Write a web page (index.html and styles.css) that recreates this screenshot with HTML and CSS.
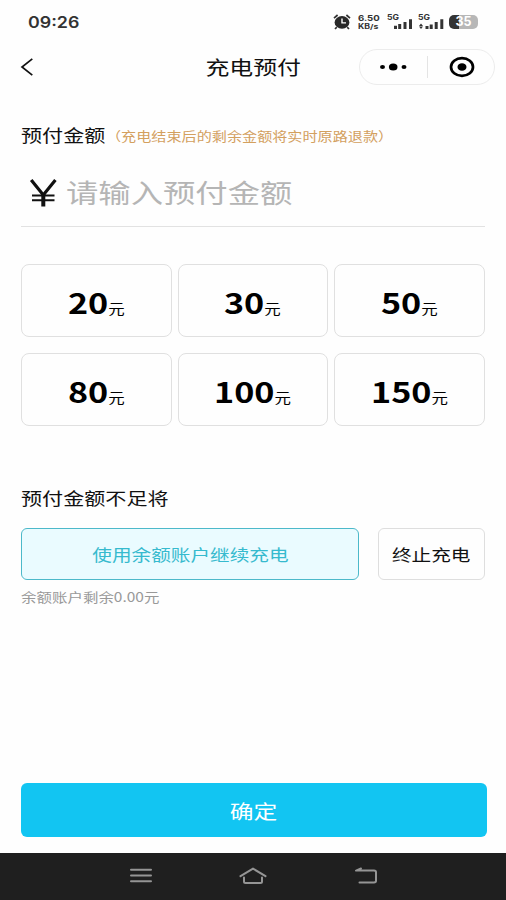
FILE: index.html
```html
<!DOCTYPE html>
<html lang="zh-CN">
<head>
<meta charset="utf-8">
<title>充电预付</title>
<link rel="stylesheet" href="styles.css">
</head>
<body>
<div class="screen">
  <header class="status">
    <span class="wide clock">09:26</span>
    <div class="indicators">
      <svg class="alarm" width="18" height="16" viewBox="0 0 18 16">
        <path d="M1 4.2 4.6 1M17 4.2 13.4 1M3.8 13.2 2 15M14.2 13.2 16 15" stroke="#333" stroke-width="1.7" fill="none"/>
        <ellipse cx="9" cy="8.4" rx="7.4" ry="6.3" fill="#292929"/>
        <path d="M9 4.6V8.9H13" stroke="#fff" stroke-width="1.4" fill="none"/>
      </svg>
      <div class="speed"><span>6.50</span><span>KB/s</span></div>
      <div class="signal">
        <span class="gen">5G</span>
        <svg width="26" height="12" viewBox="0 0 26 12"><path d="M8.5 12V8.7M12.7 12V7M18 12V5M23.5 12V2.2" stroke="#333" stroke-width="3"/></svg>
      </div>
      <div class="signal second">
        <span class="gen">5G</span>
        <svg width="26" height="12" viewBox="0 0 26 12"><path d="M3 6.5 5 9H1ZM3 12 1 9.6H5Z" fill="#333"/><path d="M9 12V9M13.2 12V7.5M18.2 12V5M23.8 12V2.2" stroke="#333" stroke-width="3"/></svg>
      </div>
      <div class="battery"><span>35</span></div>
    </div>
  </header>

  <nav class="titlebar">
    <svg class="back" width="14" height="20" viewBox="0 0 14 20"><path d="M12.3 1.8 2 10 12.3 18.2" fill="none" stroke="#111" stroke-width="1.7"/></svg>
    <h1 class="wide title">充电预付</h1>
    <div class="capsule">
      <svg width="134" height="34" viewBox="0 0 134 34">
        <ellipse cx="22.5" cy="17" rx="2.5" ry="2.1"/><ellipse cx="33.2" cy="17" rx="4.3" ry="3.6"/><ellipse cx="44" cy="17" rx="2.5" ry="2.1"/>
        <path d="M67.5 6V28" stroke="#e4e4e4"/>
        <ellipse cx="102" cy="17" rx="11" ry="8.9" fill="none" stroke="#000" stroke-width="2.7"/><ellipse cx="102" cy="17" rx="4.5" ry="3.8"/>
      </svg>
    </div>
  </nav>

  <main>
    <div class="heading">
      <h2 class="wide label amount">预付金额</h2>
      <span class="wide note">（充电结束后的剩余金额将实时原路退款）</span>
    </div>
    <div class="field">
      <svg class="yen" width="28" height="28" viewBox="0 0 28 28"><path d="M2.2 1 14.3 16 26.4 1" fill="none" stroke="#111" stroke-width="3.2"/><path d="M14.3 15V27.5" stroke="#111" stroke-width="4"/><path d="M3 16.4H25.5M3 21.2H25.5" stroke="#111" stroke-width="2"/></svg>
      <span class="wide placeholder">请输入预付金额</span>
    </div>
    <div class="options">
      <div class="option"><span class="wide price">20<small>元</small></span></div>
      <div class="option"><span class="wide price">30<small>元</small></span></div>
      <div class="option"><span class="wide price">50<small>元</small></span></div>
      <div class="option"><span class="wide price">80<small>元</small></span></div>
      <div class="option"><span class="wide price">100<small>元</small></span></div>
      <div class="option"><span class="wide price">150<small>元</small></span></div>
    </div>
    <h2 class="wide label shortage">预付金额不足将</h2>
    <div class="choices">
      <div class="choice selected"><span class="wide">使用余额账户继续充电</span></div>
      <div class="choice"><span class="wide">终止充电</span></div>
    </div>
    <p class="wide balance">余额账户剩余0.00元</p>
  </main>

  <div class="confirm"><span class="wide">确定</span></div>

  <footer class="system">
    <svg width="22" height="16" viewBox="0 0 22 16"><path d="M1 1.8H21M1 7.5H21M1 13.2H21" class="line"/></svg>
    <svg width="28" height="18" viewBox="0 0 28 18"><path d="M1.5 9.2 14 1.6 26.5 9.2M5 10.5V14.5Q5 16 6.5 16H21.5Q23 16 23 14.5V10.5" class="line"/></svg>
    <svg width="24" height="18" viewBox="0 0 24 18"><path d="M7 1.5 2 3.6H20Q22 3.6 22 5.3V13.8Q22 15.5 20 15.5H5.5" class="line"/></svg>
  </footer>
</div>
</body>
</html>
```
FILE: styles.css
```css
* { box-sizing: border-box; }
body {
  margin: 0;
  background: #fefefe;
  color: #111;
  font-family: "Noto Sans CJK SC", sans-serif;
}
h1, h2, p { margin: 0; font-weight: 400; }
svg { display: block; flex: none; }

.screen {
  width: 506px;
  height: 900px;
  display: flex;
  flex-direction: column;
  overflow: hidden;
}

/* Horizontally expanded lettering */
.wide {
  display: inline-block;
  white-space: nowrap;
  transform: scaleX(1.22);
  transform-origin: center;
}
.clock, .label, .note, .placeholder, .balance { transform-origin: left center; }

.status {
  height: 44px;
  display: flex;
  justify-content: space-between;
  padding: 0 28px;
  font-family: Inter, sans-serif;
  color: #333;
}
.clock {
  font-size: 15.5px;
  line-height: 45px;
  font-weight: 600;
  transform: scaleX(1.15);
}
.indicators {
  display: flex;
  align-items: flex-start;
  padding-top: 14px;
}
.speed {
  width: 22px;
  margin: 1px 7px 0;
  display: flex;
  flex-direction: column;
  font-size: 8px;
  line-height: 7.5px;
  font-weight: 700;
}
.speed span { transform: scaleX(1.2); transform-origin: left; }
.speed span + span { font-size: 7px; transform: scaleX(1.25); }
.signal { width: 26px; height: 15px; margin-right: 5px; }
.gen {
  display: block;
  height: 4px;
  font-size: 7.5px;
  line-height: 8px;
  font-weight: 700;
  transform: scaleX(1.15);
  transform-origin: left;
}
.signal svg { margin-top: -1px; }
.battery {
  width: 29px;
  height: 14px;
  margin-top: 1px;
  border-radius: 5px;
  background: linear-gradient(90deg, #333 36%, #b7b7b7 36%);
  color: #fff;
  font-size: 12.5px;
  line-height: 14px;
  font-weight: 700;
  text-align: center;
}

.titlebar {
  height: 46px;
  display: grid;
  grid-template-columns: 1fr auto 1fr;
  align-items: center;
  padding: 0 11px 0 20px;
}
.title { font-size: 19.6px; line-height: 46px; margin: 0 4.5px 0 -4.5px; }
.capsule {
  width: 136px;
  height: 36px;
  justify-self: end;
  border: 1px solid #ececec;
  border-radius: 18px;
}

main { flex: 1; padding: 0 21px; }
.heading { height: 60px; display: flex; align-items: center; padding-top: 29px; }
.label { font-size: 17.3px; }
.amount { width: 85px; line-height: 30px; }
.note { font-size: 12.6px; line-height: 30px; color: #d3a05e; padding-top: 2px; transform: scaleX(1.2); }
.field {
  height: 77px;
  display: flex;
  align-items: center;
  padding: 9px 0 0 8px;
  border-bottom: 1px solid #e2e2e2;
}
.placeholder { margin-left: 9px; font-size: 26.5px; line-height: 40px; margin-top: -1px; color: #b5b5b5; }
.options {
  margin-top: 37px;
  display: grid;
  grid-template-columns: repeat(3, 150.5px);
  grid-auto-rows: 73px;
  column-gap: 6px;
  row-gap: 16px;
}
.option {
  display: flex;
  align-items: center;
  justify-content: center;
  border: 1.5px solid #e0e0e0;
  border-radius: 8px;
}
.price { font-size: 28px; line-height: 40px; font-weight: 700; color: #000; padding-top: 8px; }
.price small { font-size: 13.5px; font-weight: 400; }
.shortage { display: block; margin-top: 56px; line-height: 32px; }
.choices {
  display: grid;
  grid-template-columns: 338px 107px;
  justify-content: space-between;
  height: 52px;
  margin-top: 14px;
}
.choice {
  display: flex;
  align-items: center;
  justify-content: center;
  border: 1.5px solid #dedede;
  border-radius: 6px;
  font-size: 16.1px;
}
.choice.selected { background: #eafbff; border-color: #4cb9ca; color: #36bace; }
.balance { display: block; margin-top: 5px; font-size: 12.7px; line-height: 24px; color: #999; }

.confirm {
  height: 54px;
  flex: none;
  margin: 0 19px 16px 21px;
  display: flex;
  align-items: center;
  justify-content: center;
  border-radius: 6px;
  background: #12c5f2;
  color: #fff;
  font-size: 19.5px;
}

.system {
  height: 47px;
  flex: none;
  display: flex;
  align-items: center;
  justify-content: space-between;
  padding: 0 128px 1px 130px;
  background: #1f1f1f;
}
.line { fill: none; stroke: #959595; stroke-width: 2; stroke-linecap: round; stroke-linejoin: round; }
```
